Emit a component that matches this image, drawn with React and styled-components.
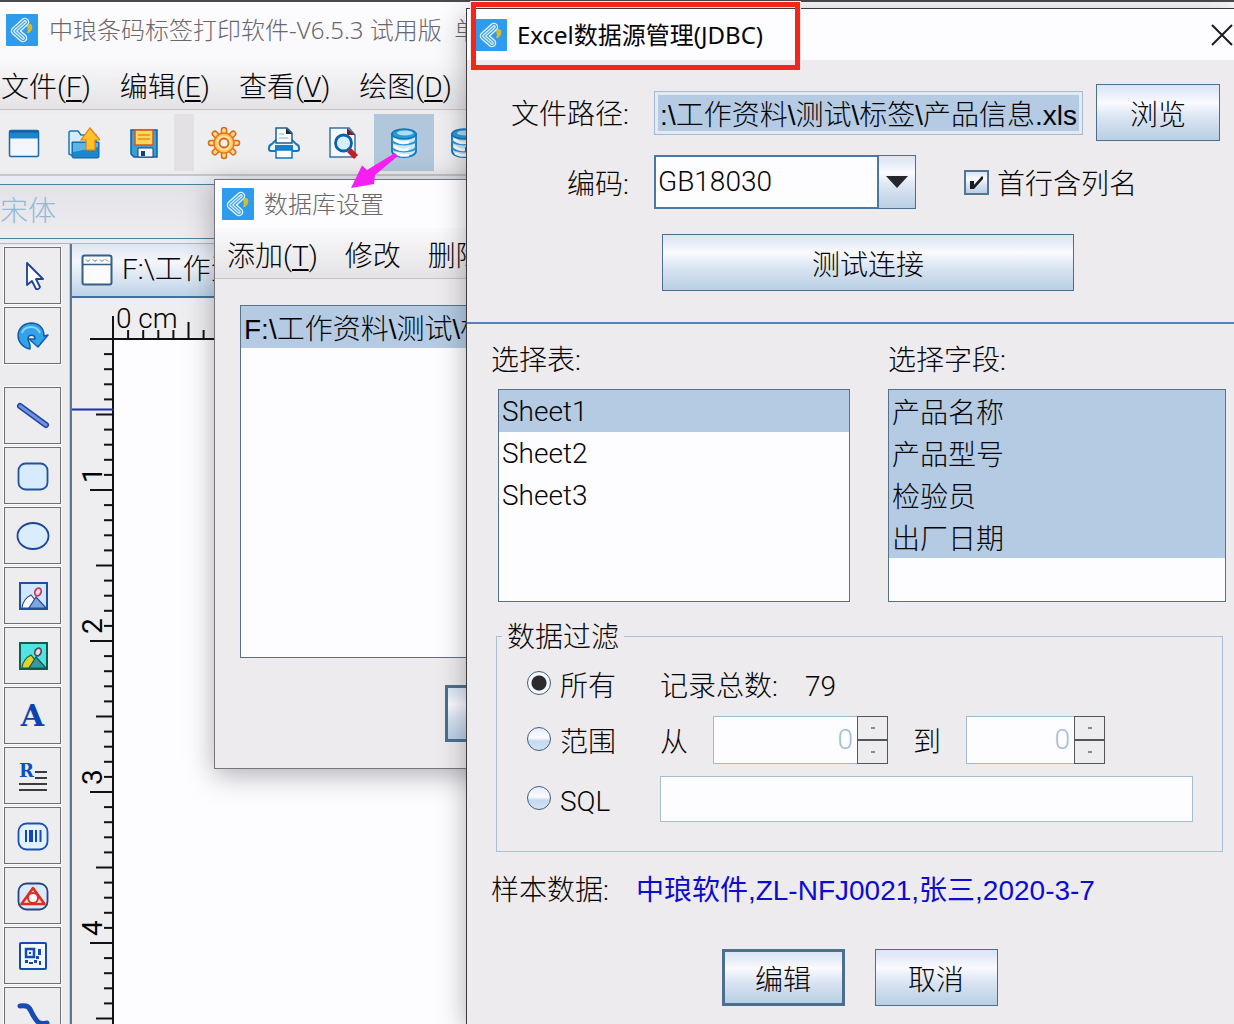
import React, { useEffect, useRef } from 'react';
import styled, { createGlobalStyle, css } from 'styled-components';

const uiFont = 'Roboto, "Liberation Sans", "Noto Sans CJK SC", sans-serif';
const dataFont = '"Liberation Sans", "Noto Sans CJK SC", sans-serif';
const titleFont = '"Noto Sans", "Noto Sans CJK SC", sans-serif';

const GlobalStyle = createGlobalStyle`
	* {
		box-sizing: border-box;
	}
	body {
		margin: 0;
		overflow: hidden;
	}
	body, button, input, select, option {
		font-family: ${uiFont};
		font-size: 28px;
		font-weight: 300;
		line-height: 34px;
		color: #050507;
	}
	button, fieldset, legend {
		margin: 0;
		padding: 0;
	}
	svg {
		display: block;
		flex: none;
	}
`

const metal = css`
	background: linear-gradient(#dbe5f4 0%, #e4ebf7 12%, #fbfaff 32%, #dbe5f3 58%, #b9cfe4 100%);
`

/* main window */

const Desktop = styled.div`
	position: relative;
	height: 100vh;
	overflow: hidden;
	background: #ecebed;
`

const MainWindow = styled.div`
	display: flex;
	flex-direction: column;
	height: 100%;
	border-top: 2px solid #4b494e;
`

const MainTitle = styled.header`
	display: flex;
	align-items: center;
	gap: 11px;
	height: 56px;
	padding-left: 6px;
	background: linear-gradient(#fdfcfe, #f9f8fa);
	font-family: ${titleFont};
	font-size: 24px;
	color: #69676c;
	white-space: nowrap;
`

const MenuBar = styled.nav`
	display: flex;
	gap: ${(props) => props.$gap}px;
	align-items: center;
	height: ${(props) => props.$height}px;
	padding: 8px 0 0 ${(props) => props.$indent}px;
	border-bottom: 1px solid #c5c3c7;
	background: linear-gradient(#faf9fb, #e4e2e5);
	white-space: nowrap;
`

const MenuItem = styled.button`
	flex: none;
	border: 0;
	background: none;

	u {
		text-decoration-thickness: 2px;
		text-underline-offset: 3px;
	}
`

const Toolbar = styled.div`
	display: flex;
	height: 66px;
	margin-left: -6px;
	padding: 4px 0 3px;
	border-bottom: 2px solid #c8c6ca;
`

const ToolbarButton = styled.button`
	display: grid;
	place-items: center;
	flex: none;
	width: 60px;
	border: 0;
	background: ${(props) => (props.$active ? '#b2c7dc' : '#eeedef')};
`

const ToolbarGap = styled.div`
	flex: none;
	width: 20px;
	background: #e3e1e4;
`

const FontBar = styled.div`
	padding: 8px 0 4px;
	border-bottom: 1px solid #b4b6ba;
	background: #e9edf3;
`

const FontSelect = styled.select`
	display: block;
	appearance: none;
	width: 460px;
	height: 55px;
	padding: 0;
	border: 1px solid #4f7f9f;
	border-width: 1px 0;
	background: linear-gradient(#e3e2e8, #eeecee);
	color: #92b9d6;
	opacity: 1;
`

const Body = styled.div`
	display: grid;
	grid-template-columns: 70px 1fr;
	flex: 1;
	min-height: 0;
`

const ToolColumn = styled.aside`
	display: flex;
	flex-direction: column;
	gap: 3px;
	padding: 3px 0 0 4px;
	overflow: hidden;
	border-right: 1px solid #c9c8cc;
`

const ToolButton = styled.button`
	display: grid;
	place-items: center;
	flex: none;
	width: 57px;
	height: 57px;
	margin-bottom: ${(props) => (props.$last ? '20px' : '0')};
	border: 1px solid #6d6f72;
	background: #edecee;
	box-shadow: 0 0 0 1px #fbfafc;
`

const Document = styled.main`
	display: flex;
	flex-direction: column;
	min-width: 0;
	min-height: 0;
	border-left: 2px solid #5a7890;
`

const Tab = styled.div`
	display: flex;
	align-items: center;
	gap: 9px;
	flex: none;
	height: 54px;
	padding-left: 9px;
	border-bottom: 2px solid #44709f;
	background: linear-gradient(#dde6f2, #f5f6fb 35%, #bdd2e8);
`

const TabLabel = styled.span`
	width: 92px;
	overflow: hidden;
	white-space: nowrap;
`

const Sheet = styled.div`
	display: grid;
	grid-template: 42px 1fr / 42px 1fr;
	flex: 1;
	min-height: 0;
	overflow: hidden;
	background: #eeedef;

	svg {
		overflow: visible;
	}
`

const Paper = styled.div`
	background: #fdfcfe;
`

/* floating windows */

const Window = styled.section`
	position: absolute;
	background: #edebed;
	box-shadow: 0 6px 26px rgba(30, 28, 40, 0.34);
`

const DatabaseWindow = styled(Window)`
	left: 214px;
	top: 179px;
	width: 584px;
	border: 1px solid #77767a;
`

const DatabaseTitle = styled.header`
	display: flex;
	align-items: center;
	gap: 10px;
	height: 48px;
	padding-left: 7px;
	background: #fdfcfe;
	font-family: ${titleFont};
	font-size: 24px;
	color: #69676c;
`

const listBox = css`
	display: block;
	width: 100%;
	padding: 0;
	overflow: hidden;
	border: 1px solid #56728a;
	border-radius: 0;
	outline: 0;
	background: #fdfcfe;

	option {
		display: flex;
		align-items: center;
		height: 42px;
		min-height: 42px;
		padding: 0 3px;
	}
	option:checked {
		background: #b4cbe3 linear-gradient(#b4cbe3, #b4cbe3);
	}
`

const DatabaseBody = styled.div`
	display: flex;
	flex-direction: column;
	align-items: center;
	gap: 27px;
	padding: 26px 25px;
`

const DatabaseList = styled.select`
	${listBox}
	height: 353px;

	option {
		font-family: ${dataFont};
	}
`

const Arrow = styled.svg`
	position: absolute;
	left: 350px;
	top: 150px;
`

const ExcelWindow = styled(Window)`
	left: 466px;
	top: 8px;
	right: 0;
	bottom: 0;
	border: 1px solid #3c3b40;
	border-width: 1px 0 0 1px;
`

const ExcelTitle = styled.header`
	display: flex;
	align-items: center;
	gap: 10px;
	height: 51px;
	padding-left: 8px;
	background: #fdfcfe;
	font-family: ${titleFont};
	font-size: 24px;
	font-weight: 400;
`

const CloseButton = styled.button`
	margin-left: auto;
	border: 0;
	background: none;
`

const Highlight = styled.div`
	position: absolute;
	left: 4px;
	top: -7px;
	width: 329px;
	height: 68px;
	border: 5px solid #f3261b;
	box-shadow: 0 0 0 1px #fbe9ea;
	pointer-events: none;
`

const Button = styled.button`
	${metal}
	flex: none;
	width: ${(props) => props.$width || '123px'};
	height: 57px;
	padding-top: 6px;
	border: ${(props) => (props.$strong ? '3px' : '1px')} solid #4c6f8e;
`

const SourceForm = styled.div`
	display: grid;
	grid-template-columns: 162px 1fr 124px;
	column-gap: 13px;
	row-gap: 14px;
	align-items: center;
	padding: 24px 14px 0 0;
`

const FormLabel = styled.label`
	padding-top: 5px;
	text-align: right;
`

const PathInput = styled.input`
	width: 100%;
	height: 44px;
	padding: 0 5px;
	border: 1px solid #a3bad0;
	border-radius: 0;
	box-shadow: inset 0 0 0 3px #e2eaf4;
	background: #b4cbe3;
	font-family: ${dataFont};
`

const PathCell = styled.div`
	padding-left: 12px;
`

const EncodingCell = styled.div`
	display: flex;
	align-items: center;
	gap: 48px;
	grid-column: 2 / 4;
	padding-left: 12px;
`

const Combo = styled.div`
	display: grid;
	width: 262px;
	height: 54px;

	> * {
		grid-area: 1 / 1;
	}
`

const ComboSelect = styled.select`
	appearance: none;
	padding: 0 42px 0 2px;
	border: 2px solid #4a77a6;
	border-radius: 0;
	background: #fdfcfe;
`

const ComboArrow = styled.span`
	${metal}
	display: grid;
	place-items: center;
	justify-self: end;
	width: 39px;
	border: 1px solid #4a6f96;
	border-left: 2px solid #4a77a6;
	pointer-events: none;
`

const Text = styled.span`
	padding-top: 5px;
`

const CheckLabel = styled.label`
	display: flex;
	align-items: center;
	gap: 8px;
`

const CheckMark = styled.span`
	display: grid;

	> * {
		grid-area: 1 / 1;
		pointer-events: none;
	}
`

const CheckBox = styled.input`
	${metal}
	appearance: none;
	width: 25px;
	height: 25px;
	margin: 0;
	border: 2px solid #54758f;
`

const TestRow = styled.div`
	padding: 25px 160px 31px 195px;
	border-bottom: 2px solid #5581b4;
`

const Lists = styled.div`
	display: grid;
	grid-template-columns: 17fr 16fr;
	gap: 38px;
	padding: 20px 8px 0 24px;
`

const ListPane = styled.div`
	display: flex;
	flex-direction: column;
	gap: 11px;
`

const ListFrame = styled.div`
	padding-left: ${(props) => (props.$inset ? '7px' : '0')};
`

const ListSelect = styled.select`
	${listBox}
	height: 213px;
`

const Filter = styled.fieldset`
	display: grid;
	grid-template-columns: 133px 1fr;
	row-gap: 12px;
	align-items: center;
	margin: 16px 11px 0 29px;
	padding: 11px 29px 29px 30px;
	border: 1px solid #a9c0d4;
`

const Legend = styled.legend`
	margin-left: -25px;
	padding: 4px 5px 0;
	line-height: 32px;
`

const RadioLabel = styled.label`
	display: flex;
	align-items: center;
	gap: 9px;
	padding-top: 5px;
`

const Radio = styled.input`
	appearance: none;
	width: 24px;
	height: 24px;
	margin: 0 0 8px;
	border: 1px solid #3f5f7c;
	border-radius: 50%;
	background: linear-gradient(#e6eefa, #fbfaff 45%, #c3d9f0 60%, #d4e3f5);

	&:checked {
		background: radial-gradient(circle, #2c2b2e 7px, #f6f8fc 8px);
	}
`

const FilterCell = styled.div`
	display: flex;
	align-items: center;
	gap: ${(props) => props.$gap || 25}px;
`

const SpinBox = styled.span`
	display: flex;
	width: ${(props) => props.$width};
	height: 48px;
`

const SpinInput = styled.input`
	flex: 1;
	min-width: 0;
	padding: 0 4px;
	border: 1px solid #9fbbd4;
	border-right: 0;
	background: #fdfcfe;
	color: #a3bed6;
	text-align: right;
	appearance: textfield;

	&::-webkit-inner-spin-button {
		appearance: none;
	}
`

const SpinButtons = styled.span`
	display: flex;
	flex-direction: column;
	width: 31px;
`

const SpinButton = styled.button`
	display: grid;
	place-items: center;
	flex: 1;
	border: 1px solid #55565a;
	background: #edecee;
`

const SqlInput = styled.input`
	width: 100%;
	height: 46px;
	border: 1px solid #a3bdd3;
	background: #fdfcfe;
`

const Sample = styled.p`
	display: flex;
	gap: 27px;
	margin: 22px 0 41px;
	padding-left: 24px;
	white-space: nowrap;
`

const SampleValue = styled.output`
	color: #0c0ccf;
	font-family: ${dataFont};
	font-weight: 400;
`

const Actions = styled.footer`
	display: flex;
	justify-content: center;
	gap: 30px;
	padding: 0 0 18px 18px;
`

/* drawings */

const Logo = () => (
    <svg width="32" height="32" viewBox="0 0 32 32">
        <rect width="32" height="32" rx="1" fill="#2e9bec" />
        <g fill="none" strokeLinejoin="round" strokeLinecap="round">
            <path d="M19 8 9 17 17 24" stroke="#eef8ff" strokeWidth="8.500" />
            <path d="M19 8 9 17 17 24" stroke="#3d9fe9" strokeWidth="6" />
            <path d="M19 8 9 17 17 24" stroke="#e4f3ff" strokeWidth="3.600" />
            <path d="M19 8 9 17 17 24" stroke="#58aeea" strokeWidth="1.200" />
        </g>
        <path d="M21 12c1-2 3-3 5-1 1 3 0 6-3 8h-2c1-2 1-4 0-7z" fill="#d3bd37" />
    </svg>
)

const NewIcon = () => (
    <svg width="32" height="32" viewBox="0 0 32 32">
        <rect x="1.500" y="3.500" width="29" height="26" rx="1.500" fill="#f4f6fe" stroke="#1b6aa8" strokeWidth="1.500" />
        <rect x="2" y="3.500" width="28" height="8" fill="#1a86cf" />
        <path d="M2 4.500h28" stroke="#155f9e" strokeWidth="2" />
    </svg>
)

const OpenIcon = () => (
    <svg width="32" height="32" viewBox="0 0 32 32">
        <path d="M1 27V6q0-2 2-2h7l3 4h15v20H3z" fill="#d6ecfb" stroke="#1a78bb" strokeWidth="1.500" />
        <path d="M4 30V15h27v15q0 1-2 1H6q-2 0-2-1z" fill="#1d86c9" stroke="#12639f" />
        <path d="M5 16h25v4L5 25z" fill="#5db4e6" />
        <path d="M22 1 32 13h-5v10h-9V13h-5z" fill="#ffc12a" stroke="#d9840f" strokeWidth="1.200" />
    </svg>
)

const SaveIcon = () => (
    <svg width="32" height="32" viewBox="0 0 32 32">
        <path d="M3 3h26v27H6l-3-3z" fill="#3d9cdd" stroke="#125f9d" strokeWidth="1.500" />
        <path d="M7 3h18v15H7z" fill="#ffd75b" stroke="#e0561d" strokeWidth="1.500" />
        <path d="M10 8h12M10 12h12" stroke="#e78a1e" strokeWidth="1.500" />
        <path d="M10 21h15v9H10z" fill="#f5f8ff" stroke="#173f7c" />
        <path d="M13 24h4v5h-4z" fill="#173f7c" />
    </svg>
)

const GearIcon = () => (
    <svg width="34" height="34" viewBox="0 0 34 34">
        {[0, 45, 90, 135, 180, 225, 270, 315].map((angle) => (
            <path key={angle} d="M14.500 8V4q0-2.500 2.500-2.500T19.500 4v4" transform={`rotate(${angle} 17 17)`} fill="#ffd98c" stroke="#dd6a16" strokeWidth="1.500" />
        ))}
        <circle cx="17" cy="17" r="10" fill="#ffc55c" stroke="#e27a1c" strokeWidth="1.500" />
        <circle cx="17" cy="17" r="6.500" fill="none" stroke="#ffe3a6" strokeWidth="2" />
        <circle cx="17" cy="17" r="4.500" fill="#f6efe9" stroke="#d9641a" strokeWidth="1.800" />
    </svg>
)

const PrintIcon = () => (
    <svg width="34" height="34" viewBox="0 0 34 34">
        <path d="M2 22q0-3 3-4l4-4h16l4 4q3 1 3 4v1q0 2-2 2H4q-2 0-2-2z" fill="#e9f6ff" stroke="#1577bd" strokeWidth="2" />
        <path d="M9 17V2h11l5 5v10z" fill="#f9fbff" stroke="#1c5f97" strokeWidth="1.500" />
        <path d="M19 2v6h6z" fill="#222a38" />
        <path d="M12 8h5M12 12h9" stroke="#7db8df" />
        <path d="M8 19h18v5H8z" fill="#187fca" />
        <path d="M9 24h16v8H9z" fill="#fff" stroke="#1577bd" strokeWidth="1.500" />
    </svg>
)

const PreviewIcon = () => (
    <svg width="32" height="34" viewBox="0 0 32 34">
        <path d="M2 2h19l6 7v22H2z" fill="#f6faff" stroke="#3475ad" strokeWidth="1.500" />
        <path d="M19 2v7h8z" fill="#7a1e2c" />
        <circle cx="15.500" cy="17" r="8" fill="#d5efff" stroke="#0d5fa8" strokeWidth="2.800" />
        <path d="m21 24 7 7" stroke="#c81d25" strokeWidth="5.500" />
    </svg>
)

const DatabaseIcon = (props) => (
    <svg width="32" height="34" viewBox="0 0 32 34">
        <path d="M4 8v17c0 8 24 8 24 0V8z" fill="#c9eafb" stroke="#0f75b9" strokeWidth="1.800" />
        <path d="M4 14c2 6 22 6 24 0M4 21c2 6 22 6 24 0" fill="none" stroke="#2b93d1" strokeWidth="2" />
        <path d="M6 13c4 4 10 4.500 15 3M6 20c4 4 10 4.500 15 3M7 27c4 3 9 3 14 2" fill="none" stroke="#fff" strokeWidth="2.500" />
        <ellipse cx="16" cy="8" rx="12" ry="5" fill="#2d9ad8" stroke="#0f75b9" strokeWidth="1.500" />
        <ellipse cx="17" cy="7" rx="8" ry="2.500" fill="#a9def7" />
        {props.add && <path d="M17 21h4v-4h5v4h4v5h-4v5h-5v-5h-4z" fill="#2f8c3c" />}
    </svg>
)

const PointerIcon = () => (
    <svg width="34" height="34" viewBox="0 0 34 34">
        <path d="M11 4v22l5-4 4 8q3 1 4-2l-4-8h7z" fill="#fff" stroke="#1b3f97" strokeWidth="1.800" strokeLinejoin="round" />
    </svg>
)

const RotateIcon = () => (
    <svg width="34" height="34" viewBox="0 0 34 34">
        <path d="M14 30C-2 27-2 5 15 4c8 0 13 5 13 13l4-1-10 12-9-8 6 0c0-5-7-5-7 0 0 3 3 4 2 10z" fill="#31a3ec" stroke="#155c9f" strokeWidth="1.500" strokeLinejoin="round" />
        <path d="M6 14c2-7 14-9 18 0" fill="none" stroke="#8bd4fb" strokeWidth="2" />
    </svg>
)

const LineIcon = () => (
    <svg width="34" height="34" viewBox="0 0 34 34">
        <path d="M4 7 30 26" stroke="#22459e" strokeWidth="6" strokeLinecap="round" />
        <path d="M4 7 30 26" stroke="#6f93e0" strokeWidth="3" strokeLinecap="round" />
    </svg>
)

const RoundRectIcon = () => (
    <svg width="34" height="34" viewBox="0 0 34 34">
        <rect x="2.500" y="4.500" width="29" height="26" rx="7" fill="#d7ebff" stroke="#23509f" strokeWidth="1.800" />
    </svg>
)

const EllipseIcon = () => (
    <svg width="34" height="34" viewBox="0 0 34 34">
        <ellipse cx="17" cy="17" rx="15.500" ry="13" fill="#d9edff" stroke="#1b459c" strokeWidth="1.800" />
    </svg>
)

const ImageIcon = (props) => (
    <svg width="34" height="34" viewBox="0 0 34 34">
        <rect x="4" y="4" width="27" height="26" fill={props.sky} stroke={props.frame} strokeWidth="2" />
        <path d="M6 29c0-6 5-11 9-13l4 5-6 8z" fill={props.near} stroke={props.frame} strokeWidth="1.200" />
        <path d="M13 29 20 18 30 29z" fill={props.far} stroke={props.frame} strokeWidth="1.200" />
        <ellipse cx="22" cy="13" rx="3" ry="4" transform="rotate(25 22 13)" fill="#e9dfe3" stroke={props.sun} strokeWidth="1.800" />
    </svg>
)

const Letter = styled.span`
	font-family: "DejaVu Serif", serif;
	font-size: 30px;
	font-weight: 700;
	line-height: 34px;
	color: #0d43b0;
`

const RichTextIcon = () => (
    <svg width="34" height="34" viewBox="0 0 34 34">
        <text x="3" y="18" fontFamily="DejaVu Serif, serif" fontSize="18" fontWeight="700" fill="#0d4fbd">R</text>
        <path d="M19 13h12M19 19h12M3 25h28M3 31h28" stroke="#3a3b40" strokeWidth="2" />
    </svg>
)

const BarcodeIcon = () => (
    <svg width="34" height="34" viewBox="0 0 34 34">
        <rect x="2.500" y="4.500" width="29" height="26" rx="8" fill="#e3f2ff" stroke="#1c4fb5" strokeWidth="1.800" />
        <path d="M10 11v12M24.500 11v12" stroke="#1546b6" strokeWidth="2" />
        <path d="M15 11v12" stroke="#1546b6" strokeWidth="4" />
        <path d="M20 11v12" stroke="#1546b6" strokeWidth="2" />
    </svg>
)

const ShapeIcon = () => (
    <svg width="34" height="34" viewBox="0 0 34 34">
        <rect x="2.500" y="4.500" width="29" height="26" rx="8" fill="#dbe9fb" stroke="#26457f" strokeWidth="1.800" />
        <path d="M17 9 28.500 25h-23z" fill="#fbe6e6" stroke="#df2b22" strokeWidth="2.500" strokeLinejoin="round" />
        <circle cx="17" cy="19" r="5" fill="#fff" stroke="#df2b22" strokeWidth="2" />
    </svg>
)

const QrIcon = () => (
    <svg width="34" height="34" viewBox="0 0 34 34">
        <rect x="4" y="4" width="26" height="26" rx="1" fill="#f5f9ff" stroke="#134bb0" strokeWidth="2" />
        <path d="M10 10h8v8h-8z" fill="none" stroke="#134bb0" strokeWidth="2.500" />
        <path d="M13 13h2v2h-2zM22 10h3v6h-3zM20 17h3v3h-3zM9 21h3v3H9zM13 23h4v2h-4zM18 21h3v3h-3zM23 22h2v4h-2z" fill="#134bb0" />
    </svg>
)

const CurveIcon = () => (
    <svg width="34" height="34" viewBox="0 0 34 34">
        <path d="M4 7c10-1 9 2 13 9s6 10 14 8" fill="none" stroke="#174bb2" strokeWidth="5" strokeLinecap="round" />
    </svg>
)

const TabIcon = () => (
    <svg width="32" height="32" viewBox="0 0 32 32">
        <rect x="1.500" y="1.500" width="29" height="29" rx="2" fill="#fbfbfd" stroke="#375f86" strokeWidth="2" />
        <path d="M2 10.500h28" stroke="#375f86" strokeWidth="1.500" />
        <path d="M5 5.500l2 2 2-2M12 5.500l2 2 2-2M19 5.500l2 2 2-2M25 5.500l2 2" fill="none" stroke="#4a6f94" />
    </svg>
)

const ticks = Array.from({ length: 80 }, (_, i) => i + 1);
const step = 15.1;

const tickLength = (i) => {
    if (i % 10 === 0) return 23;
    return i % 5 === 0 ? 17 : 9;
}

const TopRuler = () => (
    <svg width="100%" height="42">
        <path d="M-24 41H2000" stroke="#111" strokeWidth="2" />
        <path d="M-1 18V42" stroke="#111" strokeWidth="2" />
        {ticks.map((i) => (
            <path key={i} d={`M${i * step - 1} 41v${-tickLength(i)}`} stroke="#111" strokeWidth="2" />
        ))}
        <text x="2" y="30" fontSize="28" fontWeight="300">0 cm</text>
    </svg>
)

const SideRuler = () => (
    <svg width="42" height="100%">
        <path d="M41 0V2000" stroke="#111" strokeWidth="2" />
        {ticks.map((i) => (
            <path key={i} d={`M41 ${i * step - 1}h${-tickLength(i)}`} stroke="#111" strokeWidth="2" />
        ))}
        {[1, 2, 3, 4].map((cm) => (
            <text key={cm} fontSize="28" fontWeight="400" transform={`translate(30 ${cm * step * 10 - 8}) rotate(-90)`}>{cm}</text>
        ))}
        <path d="M0 69.500H42" stroke="#1c2fb0" strokeWidth="2" />
    </svg>
)

const mainMenu = [
    ['文件', 'F'],
    ['编辑', 'E'],
    ['查看', 'V'],
    ['绘图', 'D'],
];

const drawTools = [
    ['选择', <PointerIcon />],
    ['旋转', <RotateIcon />],
    ['线段', <LineIcon />],
    ['圆角矩形', <RoundRectIcon />],
    ['椭圆', <EllipseIcon />],
    ['矢量图', <ImageIcon sky="#cfe8ff" frame="#244f9c" near="#fff" far="#7ea6df" sun="#cf3358" />],
    ['图片', <ImageIcon sky="#4fe3e6" frame="#155a4a" near="#e0d32a" far="#3b97a5" sun="#5b4a50" />],
    ['文本', <Letter>A</Letter>],
    ['富文本', <RichTextIcon />],
    ['条形码', <BarcodeIcon />],
    ['形状', <ShapeIcon />],
    ['二维码', <QrIcon />],
    ['曲线', <CurveIcon />],
];

const filePath = 'F:\\工作资料\\测试\\标签\\产品信息.xls';
const sheets = ['Sheet1', 'Sheet2', 'Sheet3'];
const fields = ['产品名称', '产品型号', '检验员', '出厂日期'];

const Spinner = (props) => (
    <SpinBox $width={props.width}>
        <SpinInput type="number" defaultValue="0" aria-label={props.label} />
        <SpinButtons>
            {['增加', '减少'].map((name) => (
                <SpinButton key={name} type="button" aria-label={name}>
                    <svg width="4" height="2"><rect width="4" height="2" fill="#8a8b90" /></svg>
                </SpinButton>
            ))}
        </SpinButtons>
    </SpinBox>
)

const DatabaseDialog = () => (
    <DatabaseWindow>
        <DatabaseTitle><Logo />数据库设置</DatabaseTitle>
        <MenuBar $gap={27} $height={51} $indent={12}>
            <MenuItem>添加(<u>T</u>)</MenuItem>
            <MenuItem>修改</MenuItem>
            <MenuItem>删除</MenuItem>
        </MenuBar>
        <DatabaseBody>
            <DatabaseList size="8" aria-label="数据源" defaultValue={filePath}>
                <option>{filePath}</option>
            </DatabaseList>
            <Button $strong aria-label="关闭" />
        </DatabaseBody>
    </DatabaseWindow>
)

const ExcelDialog = () => {

    const pathRef = useRef();

    useEffect(() => {
        pathRef.current.scrollLeft = pathRef.current.scrollWidth;
    }, []);

    return (
        <ExcelWindow>
            <ExcelTitle>
                <Logo />
                Excel数据源管理(JDBC)
                <CloseButton aria-label="关闭">
                    <svg width="24" height="24" viewBox="0 0 24 24">
                        <path d="M2 2 22 22M22 2 2 22" stroke="#1c1b1e" strokeWidth="2" />
                    </svg>
                </CloseButton>
            </ExcelTitle>
            <SourceForm>
                <FormLabel htmlFor="path">文件路径:</FormLabel>
                <PathCell>
                    <PathInput id="path" ref={pathRef} defaultValue={filePath} />
                </PathCell>
                <Button $width="100%">浏览</Button>
                <FormLabel htmlFor="encoding">编码:</FormLabel>
                <EncodingCell>
                    <Combo>
                        <ComboSelect id="encoding">
                            <option>GB18030</option>
                        </ComboSelect>
                        <ComboArrow>
                            <svg width="22" height="12"><path d="M0 0h22L11 12z" fill="#26262b" /></svg>
                        </ComboArrow>
                    </Combo>
                    <CheckLabel>
                        <CheckMark>
                            <CheckBox type="checkbox" defaultChecked />
                            <svg width="25" height="25" viewBox="0 0 25 25">
                                <path d="M6 11h4v4l8-9 1 1v2l-9 10H6z" fill="#1c1b1e" />
                            </svg>
                        </CheckMark>
                        <Text>首行含列名</Text>
                    </CheckLabel>
                </EncodingCell>
            </SourceForm>
            <TestRow>
                <Button $width="100%">测试连接</Button>
            </TestRow>
            <Lists>
                <ListPane>
                    <label htmlFor="sheets">选择表:</label>
                    <ListFrame $inset>
                        <ListSelect id="sheets" size="5" defaultValue="Sheet1">
                            {sheets.map((sheet) => <option key={sheet}>{sheet}</option>)}
                        </ListSelect>
                    </ListFrame>
                </ListPane>
                <ListPane>
                    <label htmlFor="fields">选择字段:</label>
                    <ListFrame>
                        <ListSelect id="fields" multiple size="5" defaultValue={fields}>
                            {fields.map((field) => <option key={field}>{field}</option>)}
                        </ListSelect>
                    </ListFrame>
                </ListPane>
            </Lists>
            <Filter>
                <Legend>数据过滤</Legend>
                <RadioLabel><Radio type="radio" name="filter" defaultChecked />所有</RadioLabel>
                <FilterCell $gap={27}>
                    <Text>记录总数:</Text>
                    <Text>79</Text>
                </FilterCell>
                <RadioLabel><Radio type="radio" name="filter" />范围</RadioLabel>
                <FilterCell>
                    <Text>从</Text>
                    <Spinner width="175px" label="从" />
                    <Text>到</Text>
                    <Spinner width="139px" label="到" />
                </FilterCell>
                <RadioLabel><Radio type="radio" name="filter" />SQL</RadioLabel>
                <SqlInput aria-label="SQL" />
            </Filter>
            <Sample>
                <span>样本数据:</span>
                <SampleValue>中琅软件,ZL-NFJ0021,张三,2020-3-7</SampleValue>
            </Sample>
            <Actions>
                <Button $strong>编辑</Button>
                <Button>取消</Button>
            </Actions>
            <Highlight />
        </ExcelWindow>
    )
}

const App = () => (
    <Desktop>
        <GlobalStyle />
        <MainWindow>
            <MainTitle><Logo />中琅条码标签打印软件-V6.5.3 试用版&nbsp; 单</MainTitle>
            <MenuBar $gap={29} $height={52} $indent={1}>
                {mainMenu.map(([name, key]) => (
                    <MenuItem key={key}>{name}(<u>{key}</u>)</MenuItem>
                ))}
            </MenuBar>
            <Toolbar>
                <ToolbarButton aria-label="新建"><NewIcon /></ToolbarButton>
                <ToolbarButton aria-label="打开"><OpenIcon /></ToolbarButton>
                <ToolbarButton aria-label="保存"><SaveIcon /></ToolbarButton>
                <ToolbarGap />
                <ToolbarButton aria-label="设置"><GearIcon /></ToolbarButton>
                <ToolbarButton aria-label="打印"><PrintIcon /></ToolbarButton>
                <ToolbarButton aria-label="预览"><PreviewIcon /></ToolbarButton>
                <ToolbarButton $active aria-label="数据库设置"><DatabaseIcon /></ToolbarButton>
                <ToolbarButton aria-label="添加数据库"><DatabaseIcon add /></ToolbarButton>
            </Toolbar>
            <FontBar>
                <FontSelect disabled aria-label="字体">
                    <option>宋体</option>
                </FontSelect>
            </FontBar>
            <Body>
                <ToolColumn>
                    {drawTools.map(([name, icon], i) => (
                        <ToolButton key={name} aria-label={name} $last={i === 1}>{icon}</ToolButton>
                    ))}
                </ToolColumn>
                <Document>
                    <Tab><TabIcon /><TabLabel>F:\工作资</TabLabel></Tab>
                    <Sheet>
                        <span />
                        <TopRuler />
                        <SideRuler />
                        <Paper />
                    </Sheet>
                </Document>
            </Body>
        </MainWindow>
        <DatabaseDialog />
        <Arrow width="50" height="40" viewBox="0 0 50 40">
            <path d="M1 38 12 15.500 17 20 45 3 48 6 25 25 24 34z" fill="#f41ff0" />
        </Arrow>
        <ExcelDialog />
    </Desktop>
)

export default App;
